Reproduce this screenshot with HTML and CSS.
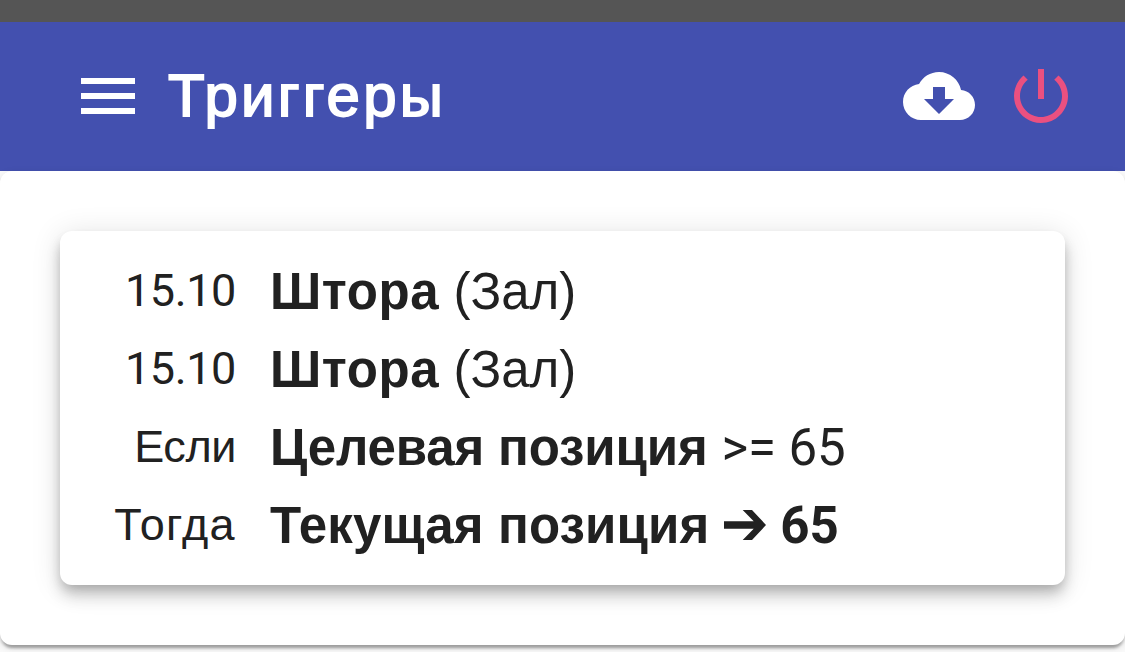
FILE: index.html
```html
<!DOCTYPE html>
<html lang="ru">
<head>
    <meta charset="UTF-8">
    <meta name="viewport" content="width=device-width, initial-scale=1.0">
    <title>Триггеры</title>
    <link rel="stylesheet" href="styles.css">
</head>
<body>
    <div class="status-bar"></div>
    <header class="app-bar">
        <svg class="icon" viewBox="0 0 24 24"><path d="M3 18h18v-2H3v2zm0-5h18v-2H3v2zm0-7v2h18V6H3z"/></svg>
        <h1 class="title">Триггеры</h1>
        <svg class="icon" viewBox="0 0 24 24"><path d="M19.35 10.04C18.67 6.59 15.64 4 12 4 9.11 4 6.6 5.64 5.35 8.04 2.34 8.36 0 10.91 0 14c0 3.31 2.69 6 6 6h13c2.76 0 5-2.24 5-5 0-2.64-2.05-4.78-4.65-4.96zM17 13l-5 5-5-5h3V9h4v4h3z"/></svg>
        <svg class="icon icon-power" viewBox="0 0 24 24"><path d="M13 3h-2v10h2V3zm4.83 2.17l-1.42 1.42C17.99 7.86 19 9.81 19 12c0 3.87-3.13 7-7 7s-7-3.13-7-7c0-2.19 1.01-4.14 2.58-5.42L6.17 5.17C4.23 6.82 3 9.26 3 12c0 4.97 4.03 9 9 9s9-4.03 9-9c0-2.74-1.23-5.18-3.17-6.83z"/></svg>
    </header>

    <main class="paper">
        <div class="card">
            <div class="row">
                <div class="label">15.10</div>
                <div class="value"><b class="device">Штора</b> <span class="room">(Зал)</span></div>
            </div>
            <div class="row">
                <div class="label">15.10</div>
                <div class="value"><b class="device">Штора</b> <span class="room">(Зал)</span></div>
            </div>
            <div class="row">
                <div class="label label-if">Если</div>
                <div class="value value-if"><b>Целевая позиция</b> <span class="num">&gt;= 65</span></div>
            </div>
            <div class="row">
                <div class="label label-then">Тогда</div>
                <div class="value value-then">
                    <b>Текущая позиция</b>
                    <svg class="arrow" viewBox="0 0 42 30"><path d="M0 11.300h29.700L18.700 0H28l14 15-14 15h-9.300l11-11.300H0z"/></svg>
                    <b class="num">65</b>
                </div>
            </div>
        </div>
    </main>
</body>
</html>
```

FILE: styles.css
```css
* {
    margin: 0;
    padding: 0;
    box-sizing: border-box;
}

body {
    background-color: #fafafa;
    color: #212121;
    font-family: 'Liberation Sans', Arial, sans-serif;
    height: 652px;
    overflow: hidden;
}

.status-bar {
    height: 22px;
    background-color: #555;
}

.app-bar {
    display: flex;
    align-items: center;
    height: 149px;
    padding: 0 48px 1px 72px;
    background-color: #4350af;
    color: white;
}

.icon {
    width: 72px;
    height: 72px;
    fill: currentColor;
}

.icon-power {
    margin-left: 30px;
    color: #ea5080;
}

.title {
    flex: 1;
    margin-left: 24px;
    font-size: 60px;
    font-weight: 400;
    line-height: 72px;
    letter-spacing: 3.2px;
    -webkit-text-stroke: 1.8px currentColor;
}

.paper {
    height: 474px;
    padding: 60px;
    background-color: white;
    border-radius: 12px;
    box-shadow: 0 6px 3px -3px rgba(0, 0, 0, 0.2), 0 3px 3px 0 rgba(0, 0, 0, 0.14), 0 3px 9px 0 rgba(0, 0, 0, 0.12);
}

.card {
    padding: 21px 36px;
    background-color: white;
    border-radius: 12px;
    box-shadow: 0 6px 12px -3px rgba(0, 0, 0, 0.2), 0 12px 15px 0 rgba(0, 0, 0, 0.14), 0 3px 30px 0 rgba(0, 0, 0, 0.12);
}

.row {
    display: flex;
    align-items: center;
    height: 78px;
}

.label {
    width: 140px;
    margin-right: 34px;
    text-align: right;
    font-family: Roboto, sans-serif;
    font-size: 45px;
    line-height: 78px;
    letter-spacing: -0.4px;
}

.label-if,
.label-then {
    font-family: 'Liberation Sans', Arial, sans-serif;
}

.label-then {
    letter-spacing: 1.4px;
}

.value {
    padding-top: 2px;
    font-size: 51px;
    line-height: 78px;
    white-space: nowrap;
}

.device {
    letter-spacing: 0.6px;
}

.value-if {
    letter-spacing: -0.15px;
}

.value-then {
    letter-spacing: 0.15px;
}

.num {
    font-family: Roboto, sans-serif;
}

.arrow {
    width: 42px;
    height: 30px;
    vertical-align: 3px;
    fill: currentColor;
}
```
